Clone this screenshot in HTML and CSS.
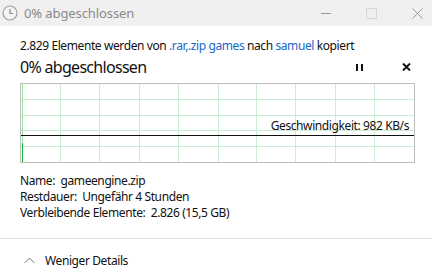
FILE: index.html
```html
<html>

<head>
    <title>0% abgeschlossen</title>
    <meta charset="utf-8">
    <link rel="stylesheet" href="styles.css">
</head>

<body>
    <div id="titlebar">
        <svg class="appicon" width="16" height="16" viewBox="0 0 16 16">
            <circle cx="8" cy="8" r="7" fill="#f4f4f4" stroke="#a0a0a0" stroke-width="1.2"/>
            <path d="M8 4v4.5h3" fill="none" stroke="#8a8a8a" stroke-width="1.2"/>
        </svg>
        <span class="wintitle">0% abgeschlossen</span>
        <div class="wincontrols">
            <span class="ctl min"></span>
            <span class="ctl max"></span>
            <svg class="ctl" width="11" height="11" viewBox="0 0 11 11">
                <path d="M0.5 0.5l10 10M10.5 0.5l-10 10" stroke="#999" stroke-width="1"/>
            </svg>
        </div>
    </div>
    <div id="main">
        <p class="summary">2.829 Elemente werden von <a>.rar,.zip games</a> nach <a>samuel</a> kopiert</p>
        <div class="headrow">
            <h1>0% abgeschlossen</h1>
            <span class="pause"><i></i><i></i></span>
            <svg class="stop" width="9" height="8" viewBox="0 0 9 8">
                <path d="M1 0.5l7 7M8 0.5l-7 7" stroke="#111" stroke-width="2"/>
            </svg>
        </div>
        <div class="chart">
            <svg width="393" height="78" viewBox="0 0 393 78">
                <g stroke="#cbeed3" stroke-width="1">
                    <path d="M39.5 0v78M78.5 0v78M118.5 0v78M157.5 0v78M197.5 0v78M235.5 0v78M274.5 0v78M314.5 0v78M353.5 0v78"/>
                    <path d="M0 15.5h393M0 31.5h393M0 46.5h393M0 62.5h393"/>
                </g>
                <path d="M1.5 0v59" stroke="#9fe29f" stroke-width="1"/>
                <path d="M1.5 59v19" stroke="#17b53b" stroke-width="1"/>
                <path d="M0 51.5h393" stroke="#111" stroke-width="1"/>
            </svg>
            <span class="speed">Geschwindigkeit: 982 KB/s</span>
        </div>
        <div class="details">
            <div>Name:&nbsp; gameengine.zip</div>
            <div>Restdauer:&nbsp; Ungefähr 4 Stunden</div>
            <div>Verbleibende Elemente:&nbsp; 2.826 (15,5 GB)</div>
        </div>
    </div>
    <div id="footer">
        <svg class="chevron" width="11" height="7" viewBox="0 0 11 7">
            <path d="M0.5 6l5-5 5 5" fill="none" stroke="#777" stroke-width="1"/>
        </svg>
        <span>Weniger Details</span>
    </div>
</body>

</html>
```

FILE: styles.css
```css
body {
    margin: 0;
    width: 432px;
    height: 276px;
    background: white;
    font-family: "Noto Sans", sans-serif;
    font-size: 12px;
    letter-spacing: -0.4px;
    color: #111;
    overflow: hidden;
}

#titlebar {
    height: 26px;
    background-color: #f0f0f0;
    display: flex;
    align-items: center;
}

.appicon {
    margin-left: 2px;
    margin-right: 6px;
}

.wintitle {
    color: #8a8a8a;
    font-size: 13px;
    letter-spacing: -0.1px;
}

.wincontrols {
    margin-left: auto;
    display: flex;
    align-items: center;
    gap: 35px;
    margin-right: 9px;
}

.ctl.min {
    width: 10px;
    height: 1px;
    background: #999;
}

.ctl.max {
    width: 9px;
    height: 9px;
    border: 1px solid #d6d6d6;
}

#main {
    padding: 12px 18px 0 20px;
}

.summary {
    margin: 0;
    line-height: 16px;
}

.summary a {
    color: #1a66cc;
}

.headrow {
    display: flex;
    align-items: center;
    height: 24px;
    margin-top: 1px;
}

h1 {
    margin: 0;
    font-size: 16px;
    font-weight: normal;
    letter-spacing: -0.7px;
}

.pause {
    margin-left: auto;
    display: flex;
    gap: 3px;
}

.pause i {
    width: 2px;
    height: 7px;
    background: #111;
}

.stop {
    margin-left: 39px;
    margin-right: 3px;
}

.chart {
    position: relative;
    width: 393px;
    height: 78px;
    border: 1px solid #bdbdbd;
    margin-top: 4px;
}

.chart svg {
    display: block;
}

.speed {
    position: absolute;
    right: 5px;
    top: 34px;
    line-height: 16px;
}

.details {
    margin-top: 10px;
    line-height: 16px;
}

#footer {
    margin-top: 17px;
    border-top: 1px solid #e3e3e3;
    display: flex;
    align-items: center;
    height: 43px;
    padding-left: 24px;
}

.chevron {
    margin-right: 10px;
}
```
